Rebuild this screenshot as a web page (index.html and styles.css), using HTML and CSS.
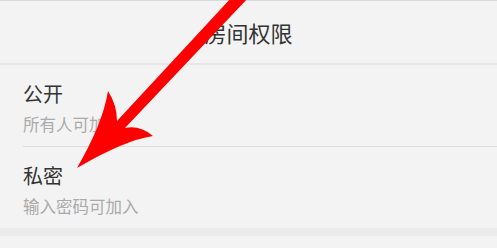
FILE: index.html
```html
<!DOCTYPE html>
<html lang="zh-CN">
<head>
<meta charset="utf-8">
<title>房间权限</title>
<link rel="stylesheet" href="styles.css">
</head>
<body>
<div class="page">
  <header class="header">房间权限</header>
  <ul class="list">
    <li class="item">
      <div class="item-title">公开</div>
      <div class="item-sub">所有人可加入</div>
    </li>
    <li class="item">
      <div class="item-title">私密</div>
      <div class="item-sub">输入密码可加入</div>
    </li>
  </ul>
  <div class="gap"></div>
  <svg class="arrow" width="497" height="248" viewBox="0 0 497 248" aria-hidden="true">
    <path d="M232,-3 L249,-3 L125,128 Q140,125 153,136 Q125,140 77,168 C92,142 104,116 108,91 Q117,105 117,121 Z" fill="#fe0000"/>
  </svg>
</div>
</body>
</html>
```
FILE: styles.css
```css
html, body {
  margin: 0;
  padding: 0;
  background: #f3f3f3;
}
body {
  font-family: "Noto Sans CJK SC", "Noto Sans", sans-serif;
  width: 497px;
  height: 248px;
  overflow: hidden;
}
.page {
  position: relative;
  width: 497px;
  height: 248px;
}
.header {
  height: 62px;
  border-top: 1px solid #dadada;
  border-bottom: 2px solid #e6e6e6;
  display: flex;
  align-items: center;
  justify-content: center;
  font-size: 22px;
  color: #333;
  box-sizing: content-box;
}
.list {
  list-style: none;
  margin: 0;
  padding: 0;
}
.item {
  padding: 15px 0 11px 23px;
  display: flex;
  flex-direction: column;
  gap: 5px;
}
.item + .item {
  border-top: 1px solid #dcdcdc;
  margin-left: 23px;
  padding-left: 0;
}
.item-title {
  font-size: 20px;
  line-height: 28px;
  color: #333;
}
.item-sub {
  font-size: 16.5px;
  line-height: 22px;
  color: #aaaaaa;
}
.gap {
  height: 8px;
  background: #ebebeb;
}
.arrow {
  position: absolute;
  left: 0;
  top: 0;
  pointer-events: none;
}
```
